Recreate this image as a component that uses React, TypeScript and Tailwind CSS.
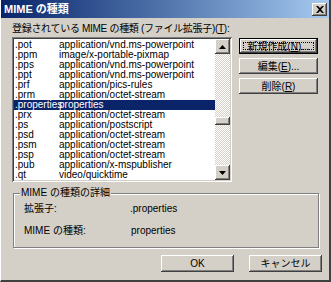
import React from 'react'

const rows: [string, string][] = [
    ['.pot', 'application/vnd.ms-powerpoint'],
    ['.ppm', 'image/x-portable-pixmap'],
    ['.pps', 'application/vnd.ms-powerpoint'],
    ['.ppt', 'application/vnd.ms-powerpoint'],
    ['.prf', 'application/pics-rules'],
    ['.prm', 'application/octet-stream'],
    ['.properties', 'properties'],
    ['.prx', 'application/octet-stream'],
    ['.ps', 'application/postscript'],
    ['.psd', 'application/octet-stream'],
    ['.psm', 'application/octet-stream'],
    ['.psp', 'application/octet-stream'],
    ['.pub', 'application/x-mspublisher'],
    ['.qt', 'video/quicktime'],
    ['.qtl', 'application/x-quicktimeplayer'],
]

const raised = 'shadow-[inset_-1px_-1px_0_#404040,inset_1px_1px_0_#ffffff,inset_-2px_-2px_0_#808080]'

const Button: React.FC<{ label: React.ReactNode; focus?: boolean }> = ({ label, focus }) => {
    if (focus) {
        return (
            <div className="h-[16px] border border-black bg-[#d4d0c8]">
                <div className={`h-full ${raised} p-[3px]`}>
                    <div className="h-full border border-dotted border-black flex items-center justify-center whitespace-nowrap">
                        {label}
                    </div>
                </div>
            </div>
        )
    }
    return (
        <div className={`h-[16px] bg-[#d4d0c8] ${raised} flex items-center justify-center whitespace-nowrap`}>{label}</div>
    )
}

export default function App() {
    return (
        <div
            className="w-[331px] h-[282px] bg-[#d4d0c8] border-l border-l-white border-r-2 border-r-[#404040] border-b-2 border-b-[#404040] flex flex-col text-[10px] text-black overflow-hidden"
            style={{ fontFamily: '"Liberation Sans", "Noto Sans CJK JP", sans-serif' }}
        >
            {/* title bar */}
            <div className="h-[18px] bg-gradient-to-r from-[#0a246a] to-[#a6caf0] flex items-center justify-between pl-[3px] pr-[2px]">
                <span className="text-white font-bold text-[11px] leading-none">MIME の種類</span>
                <div className={`w-[15px] h-[13px] bg-[#d4d0c8] ${raised} flex items-center justify-center`}>
                    <svg width="8" height="7" viewBox="0 0 8 7">
                        <path d="M0 0h2l2 2 2-2h2L5 3.5 8 7H6L4 5 2 7H0l3-3.5z" fill="#000" />
                    </svg>
                </div>
            </div>

            <div className="flex flex-col pl-[11px] pr-[7px] pt-[5px]">
                <div className="flex gap-[7px]">
                    <div className="flex flex-col w-[220px]">
                        <div className="h-[12px] leading-[12px] whitespace-nowrap tracking-[-0.3px]">
                            登録されている MIME の種類 (ファイル拡張子)(<u>T</u>):
                        </div>
                        <div className="mt-[2px] h-[145px] bg-white p-[2px] flex shadow-[inset_1px_1px_0_#808080,inset_-1px_-1px_0_#ffffff,inset_2px_2px_0_#404040,inset_-2px_-2px_0_#d4d0c8]">
                            <div className="flex-1 overflow-hidden pt-[1px]">
                                {rows.map(([ext, type]) => {
                                    const sel = ext === '.properties'
                                    return (
                                        <div
                                            key={ext}
                                            className={`h-[10px] leading-[10px] flex whitespace-nowrap ${sel ? 'bg-[#0a246a] text-white' : ''}`}
                                        >
                                            <span className="w-[45px] shrink-0 pl-[1px]">{ext}</span>
                                            <span>{type}</span>
                                        </div>
                                    )
                                })}
                            </div>
                            <div className="w-[15px] flex flex-col bg-[image:repeating-conic-gradient(#d4d0c8_0_25%,#ffffff_0_50%)] bg-[length:2px_2px]">
                                <div className={`h-[15px] bg-[#d4d0c8] ${raised} flex items-center justify-center`}>
                                    <svg width="7" height="4" viewBox="0 0 7 4"><path d="M3.5 0L7 4H0z" fill="#000" /></svg>
                                </div>
                                <div className="h-[63px]" />
                                <div className={`h-[8px] bg-[#d4d0c8] ${raised}`} />
                                <div className="flex-1" />
                                <div className={`h-[15px] bg-[#d4d0c8] ${raised} flex items-center justify-center`}>
                                    <svg width="7" height="4" viewBox="0 0 7 4"><path d="M0 0h7L3.5 4z" fill="#000" /></svg>
                                </div>
                            </div>
                        </div>
                    </div>
                    <div className="flex flex-col gap-[4px] w-[79px] pt-[15px]">
                        <Button label={<>新規作成(<u>N</u>)...</>} focus />
                        <Button label={<>編集(<u>E</u>)...</>} />
                        <Button label={<>削除(<u>R</u>)</>} />
                    </div>
                </div>

                <div className="relative mt-[11px] ml-[1px] mr-[3px] h-[55px] border border-[#808080] shadow-[1px_1px_0_#ffffff,inset_1px_1px_0_#ffffff]">
                    <span className="absolute -top-[7px] left-[6px] px-[1px] bg-[#d4d0c8] leading-[12px]">MIME の種類の詳細</span>
                    <div className="flex flex-col pl-[10px] pt-[9px] gap-[10px]">
                        <div className="flex h-[12px] leading-[12px]">
                            <span className="w-[106px]">拡張子:</span>
                            <span>.properties</span>
                        </div>
                        <div className="flex h-[12px] leading-[12px]">
                            <span className="w-[107px]">MIME の種類:</span>
                            <span>properties</span>
                        </div>
                    </div>
                </div>

                <div className="flex justify-end gap-[15px] mt-[7px]">
                    <div className={`w-[73px] h-[17px] bg-[#d4d0c8] ${raised} flex items-center justify-center`}>OK</div>
                    <div className={`w-[73px] h-[17px] bg-[#d4d0c8] ${raised} flex items-center justify-center`}>キャンセル</div>
                </div>
            </div>
        </div>
    )
}
